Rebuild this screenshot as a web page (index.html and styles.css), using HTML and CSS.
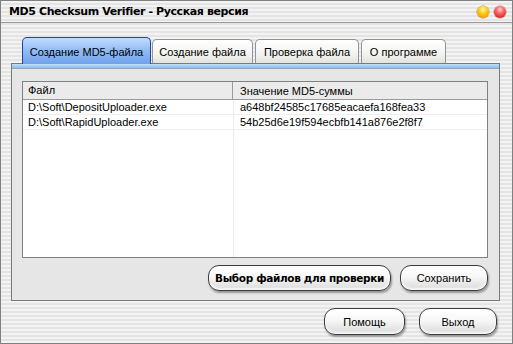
FILE: index.html
```html
<!DOCTYPE html>
<html lang="ru">
<head>
    <meta charset="UTF-8">
    <title>MD5 Checksum Verifier - Русская версия</title>
    <link rel="stylesheet" href="styles.css">
</head>
<body>
<div class="window">
    <div class="titlebar">
        <span class="title">MD5 Checksum Verifier - Русская версия</span>
        <div class="lights">
            <span class="light yellow"></span>
            <span class="light red"></span>
        </div>
    </div>
    <div class="content">
        <div class="tabs">
            <div class="tab active tab-w1">Создание MD5-файла</div>
            <div class="tab tab-w2">Создание файла</div>
            <div class="tab tab-w3">Проверка файла</div>
            <div class="tab tab-w4">О программе</div>
        </div>
        <div class="panel">
            <div class="panel-strip"></div>
            <div class="panel-body">
                <div class="list">
                    <div class="list-head">
                        <div class="col-file">Файл</div>
                        <div class="col-md5">Значение MD5-суммы</div>
                    </div>
                    <div class="list-row">
                        <div class="col-file">D:\Soft\DepositUploader.exe</div>
                        <div class="col-md5">a648bf24585c17685eacaefa168fea33</div>
                    </div>
                    <div class="list-row">
                        <div class="col-file">D:\Soft\RapidUploader.exe</div>
                        <div class="col-md5">54b25d6e19f594ecbfb141a876e2f8f7</div>
                    </div>
                </div>
                <div class="actions">
                    <button class="btn btn-bold btn-pick">Выбор файлов для проверки</button>
                    <button class="btn btn-save">Сохранить</button>
                </div>
            </div>
        </div>
        <div class="footer">
            <button class="btn btn-help">Помощь</button>
            <button class="btn btn-exit">Выход</button>
        </div>
    </div>
</div>
</body>
</html>
```

FILE: styles.css
```css
body { margin: 0; font-family: "Liberation Sans", Arial, sans-serif; font-size: 11px; color: #000; background: #fff; }
.window { width: 513px; height: 344px; box-sizing: border-box; border: 1px solid #808080; background: repeating-linear-gradient(to bottom, #f3f3f3 0 2px, #e4e4e4 2px 4px); display: flex; flex-direction: column; }

.titlebar { height: 21px; border-bottom: 1px solid #9a9a9a; display: flex; align-items: center; justify-content: space-between; padding: 0 6px 0 8px; }
.title { font-family: "DejaVu Sans", sans-serif; font-weight: bold; font-size: 11px; letter-spacing: -0.4px; white-space: nowrap; }
.lights { display: flex; gap: 5px; padding-top: 1px; }
.light { width: 12px; height: 12px; border-radius: 50%; box-shadow: 0 0 0 0.5px rgba(90,40,0,0.5); }
.yellow { background: radial-gradient(circle at 50% 30%, #fff6b0 0, #ffd21c 35%, #f39a00 80%, #c96b00 100%); }
.red { background: radial-gradient(circle at 50% 30%, #ffd6d6 0, #ff6a6a 35%, #dd2525 80%, #a80e0e 100%); }

.content { flex: 1; padding: 14px 0 0 10px; display: flex; flex-direction: column; }

.tabs { display: flex; margin-left: 11px; height: 26px; align-items: flex-end; position: relative; z-index: 1; }
.tab { height: 24px; box-sizing: border-box; margin-right: 2px; display: flex; align-items: center; justify-content: center; white-space: nowrap; border: 1px solid #8f9596; border-bottom: none; border-radius: 5px 5px 0 0; background: linear-gradient(to bottom, #ffffff, #f3f3f0 60%, #e2e2de); }
.tab.active { height: 27px; margin-bottom: -1px; margin-right: 1px; padding-top: 2px; border-color: #23439a; background: linear-gradient(to bottom, #c3dcfd, #94bdf5 45%, #6fa1ec); }
.tab-w1 { width: 129px; }
.tab-w2 { width: 101px; }
.tab-w3 { width: 104px; }
.tab-w4 { width: 85px; }

.panel { width: 489px; height: 238px; box-sizing: border-box; border: 1px solid #7a7a7a; background: #e6e6e6; display: flex; flex-direction: column; }
.panel-strip { height: 4px; background: linear-gradient(to bottom, #c4e0fb, #86bcf0); border-bottom: 1px solid #9aa6b2; }
.panel-body { flex: 1; padding: 12px 11px 0 10px; display: flex; flex-direction: column; }

.list { height: 177px; box-sizing: border-box; border: 1px solid #808080; background: #fff linear-gradient(to right, transparent 210px, #ececec 210px, #ececec 211px, transparent 211px); }
.list-head, .list-row { display: flex; white-space: nowrap; }
.list-head { height: 17px; background: #ebebeb; border-bottom: 1px solid #9a9a9a; align-items: center; }
.list-head .col-file { border-right: 1px solid #9a9a9a; height: 17px; line-height: 17px; }
.list-row { height: 14px; line-height: 14px; border-bottom: 1px solid #efefef; }
.col-file { width: 210px; padding-left: 5px; box-sizing: border-box; }
.col-md5 { padding-left: 7px; }
.list-row:first-of-type { margin-top: 1px; }

.actions { display: flex; justify-content: flex-end; gap: 9px; margin-top: 7px; }
.footer { display: flex; justify-content: flex-end; gap: 14px; margin-top: 7px; padding-right: 15px; }

.btn { height: 26px; font-family: "Liberation Sans", Arial, sans-serif; font-size: 11px; color: #000; white-space: nowrap; border: 1px solid #3c3c3c; border-radius: 11px; background: linear-gradient(to bottom, #ffffff, #f7f7f7 45%, #e2e2e2 85%, #d2d2d2); box-shadow: 1px 2px 2px rgba(0,0,0,0.35), inset 0 -2px 2px rgba(255,255,255,0.8); padding: 0; }
.btn-bold { font-family: "DejaVu Sans", sans-serif; font-size: 10.5px; font-weight: bold; letter-spacing: -0.35px; }
.btn-pick { width: 183px; }
.btn-save { width: 88px; }
.btn-help { width: 81px; height: 27px; }
.btn-exit { width: 78px; height: 27px; }
```
